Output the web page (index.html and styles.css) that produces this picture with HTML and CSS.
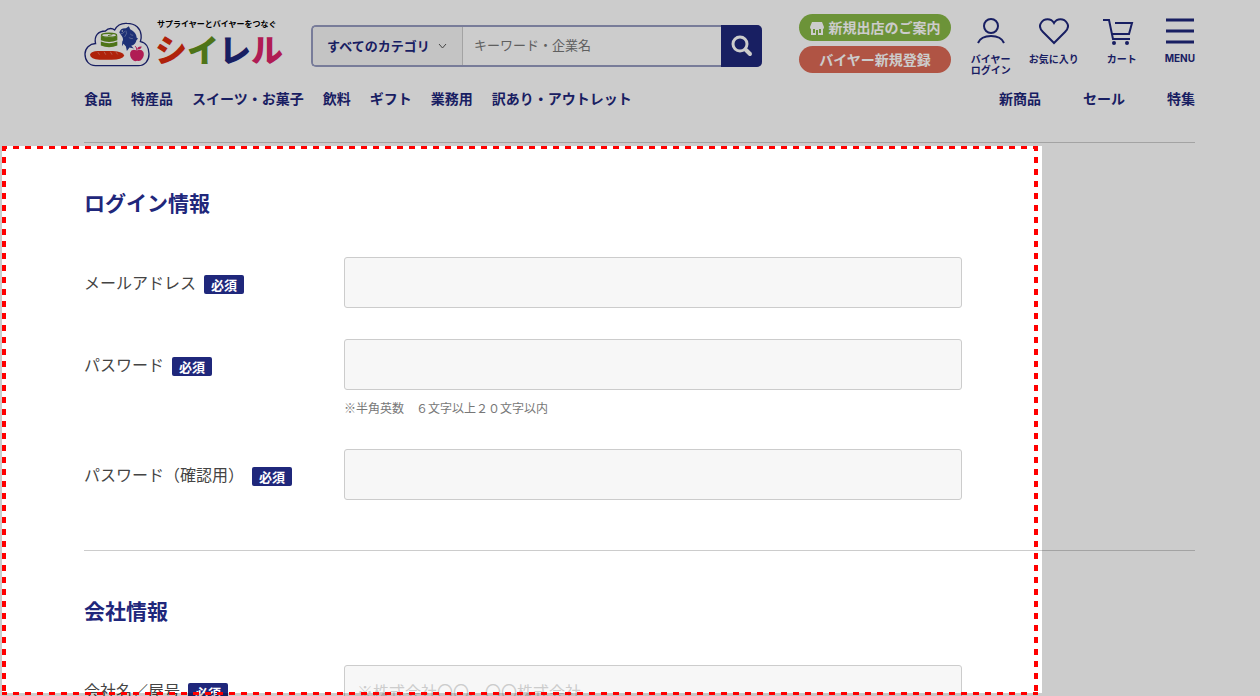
FILE: index.html
```html
<!DOCTYPE html>
<html lang="ja">
<head>
  <meta charset="UTF-8">
  <meta name="viewport" content="width=device-width, initial-scale=1.0">
  <title>シイレル</title>
  <link rel="stylesheet" href="styles.css">
</head>
<body>
  <div class="page">
    <header class="header">
      <div class="header-top">
        <a href="#" class="logo">
          <svg class="logo-mark" viewBox="11 18 200 136" aria-hidden="true">
            <path d="M46 150C25 150 14 134 14 115C14 97 28 84 46 83C41 60 54 45 76 45C86 34 98 37 104 42C113 24 126 21 141 22C168 22 182 38 184 57C185 65 184 72 182 77C199 80 208 96 208 115C208 135 195 150 176 150Z" fill="#fff" stroke="#1f277b" stroke-width="4"/>
            <path d="M62 60v13q25 11 50 0v-13q-25 10-50 0zM62 77v12q25 10 50 0v-12q-25 10-50 0z" fill="#62911f"/>
            <ellipse cx="87" cy="58" rx="23" ry="6" fill="#fff" stroke="#62911f" stroke-width="4"/>
            <path d="M84 59l13-3" stroke="#62911f" stroke-width="3"/>
            <path d="M29 117q4-11 24-11h45q32 2 35 14q-7 12-38 12H58q-27-2-29-15z" fill="#db2b0e"/>
            <path d="M53 109l5 8m14-9l5 9m14-9l5 9m12-8l5 7" stroke="#fff" stroke-width="1"/>
            <path d="M118 50q3-14 20-13l9-6l4 9q19 10 20 26l4 2l-5 5q-2 12-16 17l8 8l-13-3l-8 11l-3-14l-7-8l-5 7l1-14q5-6-1-16z" fill="#253d94"/>
            <path d="M121 54q8 0 14-8M138 44q6 8-4 19m17-9q5 5 9 4m-13 7q7 4 12 3" fill="none" stroke="#fff" stroke-width="1"/>
            <circle cx="127" cy="45" r="2" fill="#fff"/>
            <path d="M171 104q-16-7-20 6q-2 13 7 22q6 7 14 3q9 4 15-5q8-11 4-21q-6-11-20-5z" fill="#dc2469"/>
            <path d="M171 105q1-10-5-14" fill="none" stroke="#dc2469" stroke-width="3"/>
            <path d="M172 101q1-11 14-9q-2 10-14 9z" fill="#dc2469"/>
          </svg>
          <span class="logo-text">
            <span class="logo-copy">サプライヤーとバイヤーをつなぐ</span>
            <span class="logo-name"><span class="red">シ</span><span class="green">イ</span><span class="navy">レ</span><span class="pink">ル</span></span>
          </span>
        </a>

        <form class="search">
          <select class="search-category" aria-label="カテゴリ">
            <option>すべてのカテゴリ</option>
          </select>
          <input class="search-input" type="text" placeholder="キーワード・企業名" aria-label="キーワード・企業名">
          <button class="search-button" type="button" aria-label="検索">
            <svg width="22" height="22" viewBox="0 0 22 22" fill="none" stroke="#fff" stroke-linecap="round">
              <circle cx="9" cy="9" r="7" stroke-width="3"/>
              <path d="M15 15l4 4" stroke-width="4"/>
            </svg>
          </button>
        </form>

        <div class="entry">
          <a href="#" class="pill pill-green">
            <svg width="14" height="14" viewBox="0 0 14 14" fill="#fff">
              <path d="M2 1h10l2 5q0 2-1 2v6H8V9H6v5H1V8q-1 0-1-2z"/>
              <path d="M3 8h8v4H9V8H5v4H3z" fill="#88b846"/>
            </svg>
            新規出店のご案内
          </a>
          <a href="#" class="pill pill-red">バイヤー新規登録</a>
        </div>

        <div class="tools">
          <a href="#" class="tool">
            <svg width="30" height="28" viewBox="0 0 30 28"><circle cx="15" cy="8" r="7"/><path d="M2 25Q5 18 15 18T28 25"/></svg>
            <span>バイヤー<br>ログイン</span>
          </a>
          <a href="#" class="tool">
            <svg width="30" height="28" viewBox="0 0 30 28"><path d="M15 25L4 14C1 11 0 8 2 5C5 0 12 0 15 5C18 0 25 0 28 5C30 8 29 11 26 14Z"/></svg>
            <span>お気に入り</span>
          </a>
          <a href="#" class="tool tool-cart">
            <svg width="38" height="28" viewBox="0 0 38 28"><path d="M0 2h6l4 19h17M12 5h17l-3 11H9"/><g class="wheel"><circle cx="11" cy="25" r="2"/><circle cx="24" cy="25" r="2"/></g></svg>
            <span>カート</span>
          </a>
          <button type="button" class="tool tool-menu">
            <svg width="28" height="28" viewBox="0 0 28 28"><path d="M0 2h28M0 13h28M0 24h28"/></svg>
            <span>MENU</span>
          </button>
        </div>
      </div>

      <div class="header-nav">
        <nav class="nav-category">
          <a href="#">食品</a>
          <a href="#">特産品</a>
          <a href="#">スイーツ・お菓子</a>
          <a href="#">飲料</a>
          <a href="#">ギフト</a>
          <a href="#">業務用</a>
          <a href="#">訳あり・アウトレット</a>
        </nav>
        <nav class="nav-feature">
          <a href="#">新商品</a>
          <a href="#">セール</a>
          <a href="#">特集</a>
        </nav>
      </div>
    </header>

    <main>
      <form>
        <section class="section">
          <h2>ログイン情報</h2>
          <div class="row">
            <div class="row-label"><label for="email">メールアドレス</label><span class="required">必須</span></div>
            <div class="row-field"><input type="email" id="email"></div>
          </div>
          <div class="row">
            <div class="row-label"><label for="password">パスワード</label><span class="required">必須</span></div>
            <div class="row-field">
              <input type="password" id="password">
              <p class="hint">※半角英数　６文字以上２０文字以内</p>
            </div>
          </div>
          <div class="row">
            <div class="row-label"><label for="password2">パスワード（確認用）</label><span class="required">必須</span></div>
            <div class="row-field"><input type="password" id="password2"></div>
          </div>
        </section>

        <section class="section">
          <h2>会社情報</h2>
          <div class="row">
            <div class="row-label"><label for="company">会社名／屋号</label><span class="required">必須</span></div>
            <div class="row-field"><input type="text" id="company" placeholder="※株式会社〇〇、〇〇株式会社"></div>
          </div>
        </section>
      </form>
    </main>

    <div class="spotlight"></div>
  </div>
</body>
</html>
```
FILE: styles.css
```css
* {
  box-sizing: border-box;
}

body {
  margin: 0;
  background: #fff;
  color: #444;
  font-family: "Noto Sans CJK JP", sans-serif;
}

a {
  color: inherit;
  text-decoration: none;
}

input, select, button {
  font-family: inherit;
}

.page {
  position: relative;
  height: 100vh;
  overflow: hidden;
  padding: 14px 65px 0 84px;
}

/* header */
.header {
  padding-bottom: 34px;
  color: #1f277b;
  font-weight: bold;
}

.header-top {
  display: flex;
  align-items: flex-start;
  height: 62px;
}

.logo {
  display: flex;
  align-items: flex-end;
  gap: 5px;
  margin: 4px 28px 0 0;
}

.logo-mark {
  width: 66px;
  height: 45px;
}

.logo-text {
  display: flex;
  flex-direction: column;
  white-space: nowrap;
}

.logo-copy {
  padding-left: 2px;
  color: #000;
  font-size: 8px;
  line-height: 12px;
}

.logo-name {
  font-size: 32px;
  font-weight: 900;
  line-height: 37px;
}

.red { color: #db2b0e; }
.green { color: #62911f; }
.navy { color: #1f277b; }
.pink { color: #dc2469; }

.search {
  display: flex;
  flex: 0 1 451px;
  height: 42px;
  margin-top: 11px;
  border: 2px solid #979bc0;
  border-right: 0;
  border-radius: 5px;
}

.search-category {
  width: 150px;
  padding: 0 30px 2px 14px;
  border: 0;
  border-right: 1px solid #ccc;
  border-radius: 3px 0 0 3px;
  appearance: none;
  background: #f6f6f6 url("data:image/svg+xml,%3Csvg xmlns='http://www.w3.org/2000/svg' width='9' height='7'%3E%3Cpath d='M1 1l3.5 4L8 1' fill='none' stroke='%23555'/%3E%3C/svg%3E") no-repeat right 15px center;
  color: #1f277b;
  font-size: 13px;
  font-weight: bold;
}

.search-input {
  flex: 1;
  min-width: 0;
  padding: 0 11px 3px;
  border: 0;
  background: transparent;
  font-size: 13px;
}

.search-input::placeholder {
  color: #777;
}

.search-button {
  display: flex;
  align-items: center;
  justify-content: center;
  width: 41px;
  margin: -2px 0;
  padding: 0;
  border: 0;
  border-radius: 0 5px 5px 0;
  background: #1f277b;
}

.entry {
  display: flex;
  flex-direction: column;
  gap: 5px;
  width: 152px;
  margin-left: 37px;
}

.pill {
  display: flex;
  align-items: center;
  justify-content: center;
  gap: 5px;
  height: 27px;
  padding-bottom: 2px;
  border-radius: 14px;
  color: #fff;
  font-size: 14px;
}

.pill svg {
  margin-top: 2px;
}

.pill-green { background: #88b846; }
.pill-red { background: #dd6955; }

.tools {
  display: flex;
  gap: 18px;
  margin: 4px 0 0 auto;
}

.tool {
  display: flex;
  flex-direction: column;
  align-items: center;
  gap: 7px;
  padding: 0;
  border: 0;
  background: none;
  color: #1f277b;
  font-size: 10px;
  font-weight: bold;
  line-height: 11px;
  text-align: center;
  white-space: nowrap;
}

.tool svg {
  fill: none;
  stroke: #1f277b;
  stroke-width: 2;
}

.tool .wheel {
  fill: #1f277b;
  stroke: none;
}

.tool-cart {
  width: 50px;
}

.tool-menu {
  font-family: Inter, sans-serif;
}

.tool-menu svg {
  stroke-width: 3;
}

.header-nav {
  display: flex;
  justify-content: space-between;
  margin-top: 12px;
  font-size: 14px;
  line-height: 20px;
}

.nav-category {
  display: flex;
  gap: 19px;
}

.nav-feature {
  display: flex;
  gap: 42px;
}

/* form */
.section {
  padding: 44px 0 50px;
  border-top: 1px solid #ccc;
}

.section h2 {
  margin: 0 0 40px;
  color: #1f277b;
  font-size: 21px;
  line-height: 30px;
}

.row {
  display: flex;
}

.row + .row {
  margin-top: 31px;
}

.row-label {
  display: flex;
  align-items: center;
  gap: 8px;
  width: 260px;
  height: 51px;
  padding-bottom: 2px;
  font-size: 16px;
}

.required {
  margin-top: 6px;
  padding: 0 7px;
  border-radius: 2px;
  background: #1f277b;
  color: #fff;
  font-size: 13px;
  font-weight: bold;
  line-height: 19px;
}

.row-field {
  flex: 0 1 618px;
}

.row-field input {
  display: block;
  width: 100%;
  height: 51px;
  padding: 0 12px;
  border: 1px solid #ccc;
  border-radius: 3px;
  background: #f7f7f7;
  font-size: 16px;
}

.row-field input::placeholder {
  color: #ccc;
}

.hint {
  margin: 8px 0 0;
  color: #777;
  font-size: 12px;
  line-height: 20px;
}

/* highlighted area, everything around it is dimmed */
.spotlight {
  position: absolute;
  top: 146px;
  right: 218px;
  bottom: 3px;
  left: 2px;
  box-shadow: 0 0 0 9999px rgba(0, 0, 0, 0.2);
  pointer-events: none;
}

.spotlight::before {
  content: "";
  position: absolute;
  top: 0;
  right: 4px;
  bottom: -2px;
  left: 0;
  --across: linear-gradient(to right, #f00 50%, transparent 50%);
  --down: linear-gradient(to bottom, #f00 50%, transparent 50%);
  background:
    var(--across) -1px 0 / 12px 3px repeat-x,
    var(--across) -1px 100% / 12px 3px repeat-x,
    var(--down) 0 -1px / 4px 12px repeat-y,
    var(--down) 100% -1px / 4px 12px repeat-y;
}
```
